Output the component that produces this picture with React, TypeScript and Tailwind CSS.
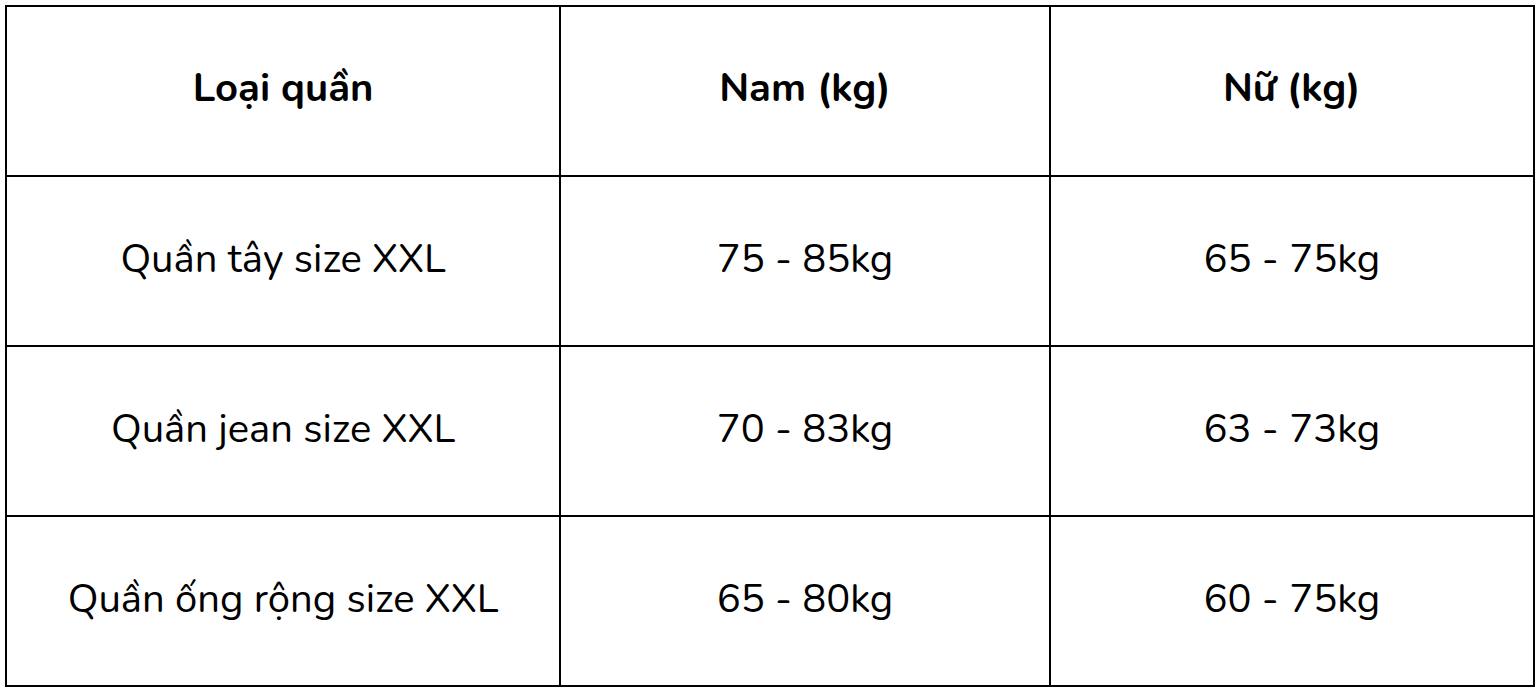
import React from "react";

const rows = [
  ["Quần tây size XXL", "75 - 85kg", "65 - 75kg"],
  ["Quần jean size XXL", "70 - 83kg", "63 - 73kg"],
  ["Quần ống rộng size XXL", "65 - 80kg", "60 - 75kg"],
];

export default function App() {
  return (
    <div className="w-[1540px] h-[691px] bg-white pl-[5px] pt-[5px]" style={{ fontFamily: "Nunito, Lato, 'Noto Sans', sans-serif" }}>
      <table className="border-collapse w-[1530px] text-black">
        <colgroup>
          <col className="w-[555px]" />
          <col className="w-[490px]" />
          <col className="w-[485px]" />
        </colgroup>
        <thead>
          <tr className="h-[170px]">
            <th className="border-2 border-black text-[40px] font-bold text-center pb-[6px]">Loại quần</th>
            <th className="border-2 border-black text-[40px] font-bold text-center pb-[6px]">Nam (kg)</th>
            <th className="border-2 border-black text-[40px] font-bold text-center pb-[6px]">Nữ (kg)</th>
          </tr>
        </thead>
        <tbody>
          {rows.map((r) => (
            <tr key={r[0]} className="h-[170px]">
              {r.map((c, i) => (
                <td key={i} className="border-2 border-black text-[40px] font-normal text-center pb-[4px]">{c}</td>
              ))}
            </tr>
          ))}
        </tbody>
      </table>
    </div>
  );
}
